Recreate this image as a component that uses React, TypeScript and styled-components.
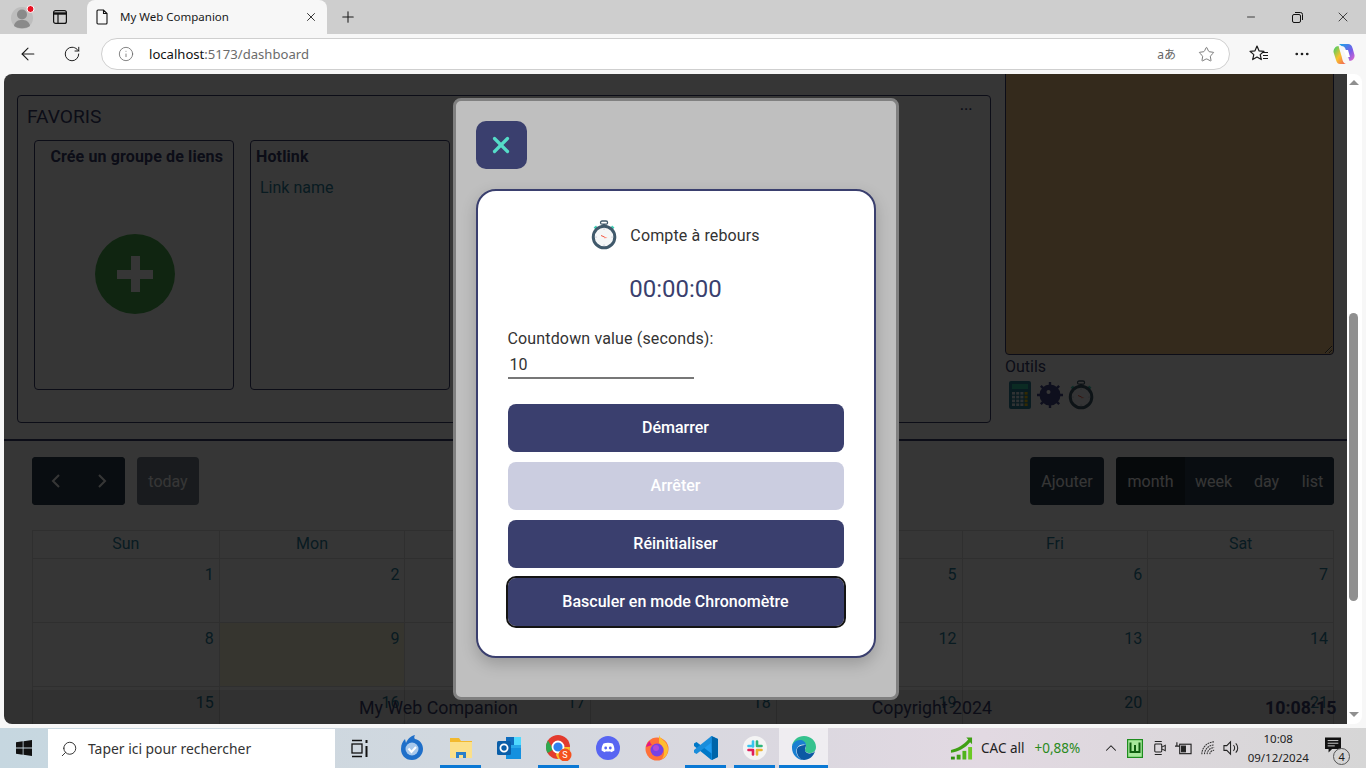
import React from 'react'
import styled, { createGlobalStyle } from 'styled-components'
import { ArrowLeft, ChevronUp, Info, MoreHorizontal, Plus, RotateCw, Search, Star, X, Minus } from 'lucide-react'

const NAVY = '#3a3f6e'
const LINK = '#2b7f9e'
const FC = '#2c3e50'

const GlobalStyle = createGlobalStyle`
  html, body {
    margin: 0;
    padding: 0;
    height: 768px;
    overflow: hidden;
    background: #f7f7f7;
    font-family: Roboto, sans-serif;
  }
  * { box-sizing: border-box; }
`

const Screen = styled.div`
  width: 1366px;
  height: 768px;
  display: flex;
  flex-direction: column;
`

/* browser chrome */
const TabStrip = styled.div`
  height: 34px;
  background: #cecece;
  display: flex;
  align-items: flex-end;
  color: #1a1a1a;
`
const ProfileSlot = styled.div`
  width: 44px;
  height: 34px;
  padding: 3px 0 0 10px;
`
const StripButton = styled.div`
  width: 43px;
  height: 34px;
  display: flex;
  align-items: center;
  justify-content: center;
  padding-right: 11px;
`
const Tab = styled.div`
  width: 240px;
  height: 34px;
  background: #f7f7f7;
  border-radius: 8px 8px 0 0;
  display: flex;
  align-items: center;
  padding: 0 9px 1px;
  font: 11.5px "Noto Sans", sans-serif;
`
const TabTitle = styled.span`
  margin-left: 12px;
  flex: 1;
`
const NewTab = styled.div`
  width: 42px;
  height: 34px;
  display: flex;
  align-items: center;
  justify-content: center;
`
const WindowControls = styled.div`
  margin-left: auto;
  display: flex;
  height: 34px;
`
const WindowButton = styled.div`
  width: 46px;
  display: flex;
  align-items: center;
  justify-content: center;
`
const Toolbar = styled.div`
  height: 40px;
  background: #f7f7f7;
  display: flex;
  align-items: center;
  color: #1a1a1a;
`
const NavButton = styled.div`
  width: 44px;
  display: flex;
  justify-content: center;
  margin-left: ${(p: { $first?: boolean }) => (p.$first ? '6px' : '0')};
`
const AddressBar = styled.div`
  width: 1129px;
  height: 32px;
  margin-left: 7px;
  background: #fff;
  border: 1px solid #cfcfcf;
  border-radius: 16px;
  display: flex;
  align-items: center;
  padding: 0 14px 0 16px;
  color: #666;
`
const Url = styled.div`
  margin-left: 15px;
  flex: 1;
  font: 13.1px "Noto Sans", sans-serif;
  color: #6b6b6b;
  b { font-weight: 400; color: #111; }
`
const Translate = styled.span`
  font: 12px "Noto Sans", "Noto Sans CJK JP", sans-serif;
  color: #666;
  margin-right: 22px;
`
const ToolbarRight = styled.div`
  display: flex;
  align-items: center;
  margin-left: 19px;
  gap: 24px;
`
const CopilotSlot = styled.div`
  display: flex;
  margin-left: -2px;
`

/* viewport */
const Viewport = styled.div`
  height: 650px;
  display: flex;
  padding-left: 4px;
  background: #f7f7f7;
`
const Page = styled.div`
  position: relative;
  width: 1343px;
  height: 650px;
  background: #fff;
  border-radius: 8px 0 0 8px;
  overflow: hidden;
`
const Scrollbar = styled.div`
  width: 15px;
  height: 650px;
  background: #fff;
  border-radius: 0 8px 8px 0;
  display: flex;
  flex-direction: column;
  align-items: center;
  padding: 6px 2px 7px 0;
`
const ArrowUp = styled.div`
  border: 5px solid transparent;
  border-top: 0;
  border-bottom: 5px solid #8f8f8f;
`
const ArrowDown = styled.div`
  margin-top: auto;
  border: 5px solid transparent;
  border-bottom: 0;
  border-top: 5px solid #8f8f8f;
`
const Thumb = styled.div`
  width: 9px;
  height: 288px;
  margin-top: 228px;
  background: #8f8f8f;
  border-radius: 5px;
`

/* dashboard below the overlay */
const TopRow = styled.div`
  display: flex;
  gap: 14px;
  padding: 0 13px;
  height: 349px;
`
const Favoris = styled.section`
  position: relative;
  width: 974px;
  height: 328px;
  margin-top: 21px;
  border: 1px solid ${NAVY};
  border-radius: 4px;
  padding: 9px 9px 0;
`
const FavTitle = styled.div`
  font-size: 19.2px;
  line-height: 24px;
  color: ${NAVY};
`
const FavMenu = styled.div`
  position: absolute;
  top: 1px;
  right: 17px;
  font-size: 13px;
  font-weight: 700;
  line-height: 18px;
  letter-spacing: 0.6px;
  color: ${NAVY};
`
const Groups = styled.div`
  display: flex;
  gap: 16px;
  margin: 11px 0 0 7px;
`
const Group = styled.div`
  width: 200px;
  height: 250px;
  border: 1px solid ${NAVY};
  border-radius: 4px;
  padding: 6px 5px 5px;
  display: flex;
  flex-direction: column;
`
const GroupTitle = styled.div<{ $end?: boolean }>`
  font-size: 16px;
  font-weight: 700;
  line-height: 20px;
  letter-spacing: 0.13px;
  color: ${NAVY};
  text-align: ${(p) => (p.$end ? 'right' : 'left')};
  padding-right: ${(p) => (p.$end ? '5px' : '0')};
  white-space: nowrap;
`
const LinkName = styled.a`
  margin: 11px 0 0 4px;
  font-size: 16px;
  line-height: 20px;
  color: ${LINK};
`
const AddGroup = styled.div`
  position: relative;
  width: 80px;
  height: 80px;
  margin: 67px 0 0 55px;
  border-radius: 50%;
  background: #4caf50;
  &::before, &::after {
    content: '';
    position: absolute;
    background: #fff;
  }
  &::before { left: 22px; top: 36px; width: 36px; height: 9px; }
  &::after { left: 36px; top: 22px; width: 9px; height: 36px; }
`
const Side = styled.aside`
  width: 329px;
`
const Notes = styled.textarea`
  display: block;
  width: 329px;
  height: 285px;
  margin-top: -4px;
  background: #f3c885;
  border: 1px solid ${NAVY};
  border-radius: 4px;
  outline: none;
`
const OutilsLabel = styled.div`
  margin-top: 2px;
  font-size: 16px;
  line-height: 20px;
  color: ${NAVY};
`
const Tools = styled.div`
  display: flex;
  align-items: center;
  gap: 5px;
  margin-top: 3px;
  padding-left: 3px;
`
const Divider = styled.div`
  height: 2px;
  margin-top: 16px;
  background: ${NAVY};
`
const CalendarWrap = styled.div`
  padding: 16px 13px 0 28px;
`
const CalToolbar = styled.div`
  display: flex;
  align-items: stretch;
  height: 48px;
  margin-bottom: 25px;
`
const BtnGroup = styled.div<{ $left?: number }>`
  display: flex;
  margin-left: ${(p) => p.$left ?? 0}px;
  background: ${FC};
  border-radius: 4px;
  overflow: hidden;
`
const FcButton = styled.div<{ $w: number; $active?: boolean }>`
  width: ${(p) => p.$w}px;
  display: flex;
  align-items: center;
  justify-content: center;
  font-size: 16px;
  color: #fff;
  background: ${(p) => (p.$active ? '#1e2b37' : FC)};
`
const TodayButton = styled(FcButton)`
  margin-left: 12px;
  border-radius: 4px;
  opacity: 0.65;
`
const Spacer = styled.div`
  flex: 1;
`
const DayHead = styled.div`
  display: grid;
  grid-template-columns: repeat(7, 1fr);
  height: 29px;
  border: 1px solid #ddd;
`
const HeadCell = styled.div`
  border-left: 1px solid #ddd;
  font-size: 16px;
  line-height: 25px;
  text-align: center;
  color: ${LINK};
  &:first-child { border-left: 0; }
`
const Week = styled.div`
  display: grid;
  grid-template-columns: repeat(7, 1fr);
  height: 64px;
  border: 1px solid #ddd;
  border-top: 0;
`
const DayCell = styled.div<{ $today?: boolean }>`
  border-left: 1px solid #ddd;
  padding: 4px 5px;
  font-size: 16px;
  line-height: 24px;
  text-align: right;
  color: ${LINK};
  background: ${(p) => (p.$today ? 'rgba(255, 220, 40, 0.15)' : 'transparent')};
  &:first-child { border-left: 0; }
`
const Footer = styled.footer`
  position: absolute;
  left: 0;
  right: 0;
  bottom: 0;
  height: 34px;
  display: flex;
  align-items: center;
  padding: 1px 0 0 355px;
  background: rgba(0, 0, 0, 0.1);
  font-size: 17.8px;
  color: ${NAVY};
`
const FooterItem = styled.span<{ $gap?: number; $bold?: boolean }>`
  margin-left: ${(p) => p.$gap ?? 0}px;
  font-weight: ${(p) => (p.$bold ? 700 : 400)};
`

/* modal */
const Overlay = styled.div`
  position: absolute;
  inset: 0;
  background: rgba(0, 0, 0, 0.79);
  display: flex;
  align-items: center;
  justify-content: center;
`
const Modal = styled.div`
  width: 446px;
  height: 602px;
  background: #bfbfbf;
  border: 3px solid #808080;
  border-radius: 8px;
  padding: 20px;
`
const CloseButton = styled.div`
  width: 51px;
  height: 48px;
  background: ${NAVY};
  border-radius: 10px;
  display: flex;
  align-items: center;
  justify-content: center;
  color: #55dcc8;
`
const Card = styled.div`
  width: 400px;
  height: 469px;
  margin-top: 20px;
  background: #fff;
  border: 2px solid ${NAVY};
  border-radius: 20px;
  box-shadow: 0 6px 16px rgba(0, 0, 0, 0.2);
  padding: 28px 30px 0;
`
const CardHead = styled.div`
  display: flex;
  align-items: center;
  justify-content: center;
  gap: 13px;
  height: 32px;
  font-size: 16px;
  letter-spacing: 0.13px;
  color: #333;
`
const Time = styled.div`
  margin-top: 23px;
  font-size: 24px;
  line-height: 30px;
  text-align: center;
  color: ${NAVY};
`
const FieldLabel = styled.label`
  display: block;
  margin-top: 25px;
  font-size: 16px;
  line-height: 20px;
  letter-spacing: 0.15px;
  color: #333;
`
const FieldInput = styled.input`
  display: block;
  width: 186px;
  height: 27px;
  margin-top: 3px;
  padding: 0 2px 1px;
  border: 0;
  border-bottom: 2px solid #777;
  outline: none;
  background: transparent;
  font: 16px Roboto, sans-serif;
  color: #333;
`
const Actions = styled.div`
  display: flex;
  flex-direction: column;
  gap: 10px;
  margin-top: 25px;
`
const ActionButton = styled.button<{ $focus?: boolean }>`
  width: 336px;
  height: 48px;
  border: 0;
  border-radius: 8px;
  padding: 0 0 2px;
  background: ${NAVY};
  font: 500 16px Roboto, sans-serif;
  color: #fff;
  outline: ${(p) => (p.$focus ? '2px solid #141414' : 'none')};
  &:disabled { background: #cbcde0; }
`

/* taskbar */
const Taskbar = styled.div`
  height: 40px;
  margin-top: 4px;
  display: flex;
  align-items: center;
  background: linear-gradient(90deg, #c6d7e0 0%, #d2d8df 35%, #dcd8e0 60%, #e2d9e2 72%, #d6d6d6 100%);
  font-family: "Noto Sans", sans-serif;
  color: #1a1a1a;
`
const StartButton = styled.div`
  width: 48px;
  display: flex;
  justify-content: center;
`
const SearchBox = styled.div`
  width: 287px;
  height: 39px;
  margin-top: 1px;
  background: #fff;
  display: flex;
  align-items: center;
  padding-left: 12px;
  gap: 10px;
  font-size: 13.9px;
  color: #333;
`
const TaskView = styled.div`
  width: 52px;
  padding-right: 2px;
  display: flex;
  justify-content: center;
`
const AppCell = styled.div<{ $open?: boolean; $active?: boolean }>`
  width: ${(p) => (p.$active ? '49px' : '41px')};
  margin: ${(p) => (p.$active ? '0' : '0 4px')};
  height: 40px;
  display: flex;
  align-items: center;
  justify-content: center;
  background: ${(p) => (p.$active ? 'rgba(255,255,255,.55)' : 'transparent')};
  border-bottom: 3px solid ${(p) => (p.$open ? '#0a78d4' : 'transparent')};
  padding-top: 3px;
`
const Ticker = styled.div`
  display: flex;
  align-items: center;
  margin-left: 122px;
  font-size: 13.5px;
  color: #222;
`
const TickerName = styled.span`
  margin-left: 8px;
`
const TickerValue = styled.span`
  margin-left: 10px;
  color: #2a8a1c;
`
const Tray = styled.div`
  display: flex;
  align-items: center;
  margin-left: 18px;
`
const TraySlot = styled.div<{ $w: number }>`
  width: ${(p) => p.$w}px;
  display: flex;
  justify-content: center;
`
const Clock = styled.div`
  width: 70px;
  text-align: center;
  font-size: 11.5px;
  line-height: 19px;
  color: #222;
`
const Notify = styled.div`
  position: relative;
  width: 24px;
  height: 24px;
  margin-left: 12px;
`
const NotifyBadge = styled.span`
  position: absolute;
  right: -1px;
  bottom: -5px;
  width: 17px;
  height: 17px;
  border: 1px solid #555;
  border-radius: 50%;
  background: #d4d4d4;
  font-size: 11px;
  line-height: 15px;
  text-align: center;
`

const Stopwatch = ({ size = 30 }: { size?: number }) => (
  <svg width={size * 0.87} height={size} viewBox="0 0 26 30">
    <rect x="9.5" y="1" width="7" height="3.2" rx="1.5" fill="none" stroke="#40596b" strokeWidth="1.3" />
    <rect x="11.8" y="4" width="2.4" height="3" fill="#40596b" />
    <path d="M2.6 7.4 5 5.6l1.4 1.8-2.3 1.8zM23.4 7.4 21 5.6l-1.4 1.8 2.3 1.8z" fill="#3fcfb4" />
    <circle cx="13" cy="17" r="10.8" fill="#f4f6f7" stroke="#40596b" strokeWidth="3" />
    <path d="M10 15.500 13.400 17" stroke="#f1543f" strokeWidth="1" />
    <path d="M13.200 16.400 16.500 18l-3.500.3z" fill="#ff8a7a" />
    <circle cx="13" cy="9" r=".6" fill="#aab" />
    <circle cx="13" cy="25" r=".6" fill="#aab" />
    <circle cx="5" cy="17" r=".6" fill="#aab" />
    <circle cx="21" cy="17" r=".6" fill="#aab" />
  </svg>
)

const Calculator = () => (
  <svg width="24" height="28" viewBox="0 0 24 28">
    <rect x="1" y="0" width="22" height="28" rx="2" fill="#2e7f96" />
    <rect x="4" y="3" width="16" height="5" fill="#36c9a5" />
    {[0, 1, 2, 3].map((r) =>
      [0, 1, 2, 3].map((c) => (
        <rect key={`${r}-${c}`} x={4 + c * 4.2} y={11 + r * 3.8} width="3" height="2.6" fill={c === 3 ? '#f1c40f' : '#dfe9ee'} />
      )),
    )}
  </svg>
)

const Bomb = () => (
  <svg width="26" height="26" viewBox="0 0 26 26">
    <path d="M13 0v5M13 21v5M0 13h5M21 13h5M3.800 3.800l3.400 3.400M18.800 18.800l3.400 3.400M3.800 22.200l3.400-3.400M18.800 7.200l3.400-3.400" stroke="#45478a" strokeWidth="2.400" />
    <circle cx="13" cy="13" r="10.500" fill="#45478a" />
    <circle cx="11.500" cy="10" r="2" fill="#fff" />
  </svg>
)

const WinLogo = () => (
  <svg width="16" height="16" viewBox="0 0 16 16" fill="#111">
    <path d="M0 2.300 6.700 1.300v6.200H0zM7.500 1.200 16 0v7.500H7.500zM0 8.400h6.700v6.300L0 13.700zM7.500 8.400H16V16l-8.500-1.200z" />
  </svg>
)

const TaskViewIcon = () => (
  <svg width="18" height="19" viewBox="0 0 18 19" fill="none" stroke="#111" strokeWidth="1.300">
    <path d="M1 1.500h10M1 17.500h10" />
    <rect x="1" y="5" width="10" height="9" />
    <path d="M15.500 1v3M15.500 7v11" strokeWidth="2" />
  </svg>
)

const Thunderbird = () => (
  <svg width="24" height="26" viewBox="0 0 24 26">
    <path d="M12 25C5 25 1 20 1 14 1 9 3 6 5 4l1 4c1-3 4-7 9-8-1 2-1 3 0 4 5 1 8 5 8 10 0 6-5 11-11 11z" fill="#1f6fc9" />
    <circle cx="12" cy="14" r="6.500" fill="#a9c9ec" />
    <path d="m8.500 13.500 3 3.500 4.500-5" fill="none" stroke="#fff" strokeWidth="2" />
  </svg>
)
const Files = () => (
  <svg width="24" height="22" viewBox="0 0 24 22">
    <path d="M1 1h9l2 3h11v17H1z" fill="#f2b92e" />
    <rect x="1" y="5" width="22" height="16" fill="#fbe08a" />
    <path d="M7 21v-6h10v6h-3v-3h-4v3z" fill="#2b7fc9" />
  </svg>
)
const Outlook = () => (
  <svg width="25" height="24" viewBox="0 0 25 24">
    <path d="M9 1h15v16H9z" fill="#28a8ea" />
    <path d="M9 1h8v8H9z" fill="#0f6cbd" />
    <path d="M17 1l7 0v8h-7z" fill="#50d9ff" />
    <path d="M9 12l15 0v11H9z" fill="#1490df" />
    <rect x="0" y="5" width="14" height="14" rx="1.500" fill="#0a5ea8" />
    <circle cx="7" cy="12" r="3.600" fill="none" stroke="#fff" strokeWidth="1.800" />
  </svg>
)
const Chrome = () => (
  <svg width="26" height="26" viewBox="0 0 26 26">
    <circle cx="12" cy="12" r="12" fill="#e33b2e" />
    <path d="M12 12 1.600 18A12 12 0 0 1 2 5.500L7 14z" fill="#2fa84f" />
    <path d="M12 12h12a12 12 0 0 1-12 12l-2-4z" fill="#fbc02d" />
    <circle cx="12" cy="12" r="5.500" fill="#2f80ed" stroke="#fff" strokeWidth="1.800" />
    <circle cx="19" cy="20" r="6.500" fill="#f4511e" />
    <text x="19" y="23" fontSize="9" textAnchor="middle" fill="#fff" fontFamily="Roboto, sans-serif">S</text>
  </svg>
)
const Discord = () => (
  <svg width="24" height="24" viewBox="0 0 24 24">
    <circle cx="12" cy="12" r="12" fill="#5865f2" />
    <path d="M7.500 7.600c2.800-1 6.200-1 9 0 1.400 2.100 2 4.300 1.900 7-1.100.9-2.200 1.400-3.400 1.700l-.7-1.100c-1.700.4-3.100.4-4.600 0l-.7 1.100c-1.200-.3-2.300-.8-3.400-1.700-.1-2.700.5-4.900 1.900-7z" fill="#fff" />
    <circle cx="9.700" cy="12" r="1.400" fill="#5865f2" />
    <circle cx="14.300" cy="12" r="1.400" fill="#5865f2" />
  </svg>
)
const Firefox = () => (
  <svg width="24" height="26" viewBox="0 0 24 26">
    <circle cx="12" cy="14" r="11.500" fill="#ff7139" />
    <path d="M14 0c1 4 8 6 9 13 .5 5-2 9-6 11 4-6 2-12-3-16z" fill="#ffbd2e" />
    <path d="M1 12c1-3 2-5 4-6 0 2 1 3 2 4z" fill="#e31587" />
    <circle cx="12" cy="15" r="6.500" fill="#7542e5" />
    <circle cx="11" cy="13" r="3" fill="#b04ad8" />
  </svg>
)
const VsCode = () => (
  <svg width="26" height="26" viewBox="0 0 26 26">
    <path d="M18.500 1 25 4v18l-6.500 3L7 14.500z" fill="#1f9cf0" />
    <path d="M18.500 1 19 25l6-3V4z" fill="#0065a9" />
    <path d="M1 8.500 3.500 7l15 11.500V25L1 11z" fill="#0078c8" />
    <path d="M1 17.500 3.500 19l15-11.500V1L1 15z" fill="#1a8ddb" />
  </svg>
)
const Slack = () => (
  <svg width="24" height="24" viewBox="0 0 24 24">
    <circle cx="12" cy="12" r="12" fill="#f4f4f4" />
    <g strokeWidth="2.600" strokeLinecap="round">
      <path d="M10 5.500v5" stroke="#36c5f0" />
      <path d="M5.500 10H9" stroke="#36c5f0" />
      <path d="M18.500 10h-4.500" stroke="#2eb67d" />
      <path d="M14 5.500V9" stroke="#2eb67d" />
      <path d="M14 18.500V14" stroke="#ecb22e" />
      <path d="M18.500 14H15" stroke="#ecb22e" />
      <path d="M5.500 14H10" stroke="#e01e5a" />
      <path d="M10 18.500V15" stroke="#e01e5a" />
    </g>
  </svg>
)
const Edge = () => (
  <svg width="26" height="26" viewBox="0 0 26 26">
    <path d="M13 1c7 0 12 5 12 11 0 4-3 6-6 6-4 0-5-2-5-3 0-1 1-2 1-4 0-3-3-5-6-5-4 0-7 3-8 5 1-6 6-10 12-10z" fill="#35c28e" />
    <path d="M1 11c1-3 4-6 8-6 3 0 6 2 6 5-2-1-7-1-9 3-2 5 1 10 6 12C6 25 1 19 1 13z" fill="#1a7fd1" />
    <path d="M6 14c1-3 5-4 9-4 0 2-1 3-1 5 0 3 4 4 7 3 1 0 2-1 3-2-1 5-6 9-11 9-4 0-8-5-7-11z" fill="#0c59a4" />
  </svg>
)
const Copilot = () => (
  <svg width="22" height="22" viewBox="0 0 22 22">
    <defs>
      <linearGradient id="cpA" x1="0" y1="0" x2="1" y2="1">
        <stop offset="0" stopColor="#14a8e8" />
        <stop offset=".6" stopColor="#7a5be8" />
        <stop offset="1" stopColor="#e868c8" />
      </linearGradient>
      <linearGradient id="cpB" x1="0" y1="0" x2="1" y2="1">
        <stop offset="0" stopColor="#2fce6f" />
        <stop offset=".5" stopColor="#f8c22c" />
        <stop offset="1" stopColor="#f0555c" />
      </linearGradient>
    </defs>
    <path d="M6 1h9c2.500 0 3.500 1 4.500 4l2 7c.5 3-2 6-5 6l-3-9-1-3c-.6-2-2-3-4-3z" fill="url(#cpA)" />
    <path d="M.5 9c0-3 2-6 5-6l3 10 1 4c.5 2 2 4 4 4H7c-2 0-3-1-4-4z" fill="url(#cpB)" />
    <path d="M10.500 7h4.500l2 7h-3.500z" fill="#fff" />
  </svg>
)
const Profile = () => (
  <svg width="30" height="28" viewBox="0 0 30 28">
    <circle cx="12" cy="15" r="11" fill="#bdbdbd" />
    <circle cx="12" cy="11.500" r="5" fill="#8a8a8a" />
    <path d="M4 23c1-5 4-6 8-6s7 1 8 6c-4 3-12 3-16 0z" fill="#8a8a8a" />
    <circle cx="20.500" cy="6" r="3.500" fill="#e81123" stroke="#fff" strokeWidth="1" />
  </svg>
)
const Favorites = () => (
  <svg width="20" height="20" viewBox="0 0 20 20" fill="none" stroke="#1a1a1a" strokeWidth="1.200">
    <path d="M8 2l2 4.800 5 .5-3.800 3.300 1.100 5L8 13l-4.300 2.600 1.100-5L1 7.300l5-.5z" strokeLinejoin="round" />
    <path d="M13 8.500h6M14 11.500h5M14 14.500h5" />
  </svg>
)
const SidebarIcon = () => (
  <svg width="14" height="14" viewBox="0 0 14 14" fill="none" stroke="#111" strokeWidth="1.200">
    <rect x=".6" y=".6" width="12.800" height="12.800" rx="2" />
    <path d="M.6 3.500h12.800" strokeWidth="2.400" />
    <path d="M5 3.500v10" />
  </svg>
)
const PageIcon = () => (
  <svg width="12" height="16" viewBox="0 0 12 16" fill="none" stroke="#111" strokeWidth="1.100">
    <path d="M1 2a1 1 0 0 1 1-1h5.500L11 4.500V14a1 1 0 0 1-1 1H2a1 1 0 0 1-1-1zM7.500 1v3.500H11" />
  </svg>
)
const Restore = () => (
  <svg width="11" height="11" viewBox="0 0 11 11" fill="none" stroke="#111" strokeWidth="1">
    <rect x=".5" y="2.500" width="8" height="8" rx="1.500" />
    <path d="M3 .5h5.500a2 2 0 0 1 2 2V8" />
  </svg>
)
const Chart = () => (
  <svg width="23" height="24" viewBox="0 0 24 24">
    <path d="M1 14C8 12 14 9 19 3l-2-2h6v7l-2-2C16 12 9 16 1 17z" fill="#3fa014" />
    <rect x="1" y="21" width="4" height="3" fill="#2f8f10" />
    <rect x="7" y="19" width="4" height="5" fill="#3fa014" />
    <rect x="13" y="15" width="4" height="9" fill="#4fb31c" />
    <rect x="19" y="11" width="4" height="13" fill="#6bc924" />
  </svg>
)
const TrayW = () => (
  <svg width="16" height="19" viewBox="0 0 16 19">
    <rect x=".6" y=".6" width="14.800" height="17.800" fill="#a6e89a" stroke="#1e8c1e" strokeWidth="1.200" />
    <path d="M3.500 3.500v9.500h9V3.500M8 6v7" fill="none" stroke="#0e5e0e" strokeWidth="2" />
  </svg>
)
const TrayMic = () => (
  <svg width="14" height="18" viewBox="0 0 16 18" fill="none" stroke="#222" strokeWidth="1.200">
    <rect x="2" y="4.500" width="8" height="9" rx="1" />
    <path d="M10 8l4-2v6l-4-2M2 1.500h8M2 16.500h8" />
  </svg>
)
const TrayPower = () => (
  <svg width="17" height="14" viewBox="0 0 18 14" fill="none" stroke="#222" strokeWidth="1.200">
    <rect x="5" y="3" width="12" height="10" />
    <rect x="7" y="5" width="4" height="6" fill="#222" />
    <path d="M0 5h5M2 1v4" />
  </svg>
)
const TrayWifi = () => (
  <svg width="14" height="14" viewBox="0 0 16 16" fill="none" stroke="#333" strokeWidth="1.200">
    <path d="M1 15A14 14 0 0 1 15 1M4 15A11 11 0 0 1 15 4.500M7 15a8 8 0 0 1 8-7.500M10 15a5 5 0 0 1 5-4.500" strokeDasharray="2 .8" />
  </svg>
)
const TrayVolume = () => (
  <svg width="17" height="16" viewBox="0 0 18 16" fill="none" stroke="#222" strokeWidth="1.100">
    <path d="M1 5.500h3L8 1.500v13l-4-4H1zM11 5a4 4 0 0 1 0 6M13.500 3a7 7 0 0 1 0 10" />
  </svg>
)
const NotifyIcon = () => (
  <svg width="16" height="16" viewBox="0 0 18 17">
    <path d="M0 0h18v13H8l-4 4v-4H0z" fill="#111" />
    <path d="M3 3.500h12M3 6.500h12M3 9.500h8" stroke="#ddd" />
  </svg>
)

const weeks = [
  [1, 2, 3, 4, 5, 6, 7],
  [8, 9, 10, 11, 12, 13, 14],
  [15, 16, 17, 18, 19, 20, 21],
]
const days = ['Sun', 'Mon', 'Tue', 'Wed', 'Thu', 'Fri', 'Sat']

export default function App() {
  return (
    <Screen>
      <GlobalStyle />
      <TabStrip>
        <ProfileSlot><Profile /></ProfileSlot>
        <StripButton><SidebarIcon /></StripButton>
        <Tab>
          <PageIcon />
          <TabTitle>My Web Companion</TabTitle>
          <X size={14} strokeWidth={1.5} />
        </Tab>
        <NewTab><Plus size={18} strokeWidth={1.4} /></NewTab>
        <WindowControls>
          <WindowButton><Minus size={12} strokeWidth={1.6} /></WindowButton>
          <WindowButton><Restore /></WindowButton>
          <WindowButton><X size={16} strokeWidth={1.2} /></WindowButton>
        </WindowControls>
      </TabStrip>
      <Toolbar>
        <NavButton $first><ArrowLeft size={20} strokeWidth={1.3} /></NavButton>
        <NavButton><RotateCw size={18} strokeWidth={1.3} /></NavButton>
        <AddressBar>
          <Info size={16} strokeWidth={1.2} />
          <Url><b>localhost</b>:5173/dashboard</Url>
          <Translate>aあ</Translate>
          <Star size={17} strokeWidth={1.2} />
        </AddressBar>
        <ToolbarRight>
          <Favorites />
          <MoreHorizontal size={18} strokeWidth={1.6} />
          <CopilotSlot><Copilot /></CopilotSlot>
        </ToolbarRight>
      </Toolbar>
      <Viewport>
        <Page>
          <TopRow>
            <Favoris>
              <FavTitle>FAVORIS</FavTitle>
              <FavMenu>...</FavMenu>
              <Groups>
                <Group>
                  <GroupTitle $end>Crée un groupe de liens</GroupTitle>
                  <AddGroup />
                </Group>
                <Group>
                  <GroupTitle>Hotlink</GroupTitle>
                  <LinkName>Link name</LinkName>
                </Group>
              </Groups>
            </Favoris>
            <Side>
              <Notes readOnly />
              <OutilsLabel>Outils</OutilsLabel>
              <Tools>
                <Calculator />
                <Bomb />
                <Stopwatch />
              </Tools>
            </Side>
          </TopRow>
          <Divider />
          <CalendarWrap>
            <CalToolbar>
              <BtnGroup>
                <FcButton $w={47}><svg width="12" height="16" viewBox="0 0 12 16" fill="none" stroke="#fff" strokeWidth="2"><path d="M9 2 3 8l6 6" /></svg></FcButton>
                <FcButton $w={46}><svg width="12" height="16" viewBox="0 0 12 16" fill="none" stroke="#fff" strokeWidth="2"><path d="m3 2 6 6-6 6" /></svg></FcButton>
              </BtnGroup>
              <TodayButton $w={62}>today</TodayButton>
              <Spacer />
              <BtnGroup>
                <FcButton $w={74}>Ajouter</FcButton>
              </BtnGroup>
              <BtnGroup $left={12}>
                <FcButton $w={69} $active>month</FcButton>
                <FcButton $w={57}>week</FcButton>
                <FcButton $w={49}>day</FcButton>
                <FcButton $w={43}>list</FcButton>
              </BtnGroup>
            </CalToolbar>
            <DayHead>
              {days.map((d) => <HeadCell key={d}>{d}</HeadCell>)}
            </DayHead>
            {weeks.map((w) => (
              <Week key={w[0]}>
                {w.map((n) => <DayCell key={n} $today={n === 9}>{n}</DayCell>)}
              </Week>
            ))}
          </CalendarWrap>
          <Footer>
            <FooterItem>My Web Companion</FooterItem>
            <FooterItem $gap={354}>Copyright 2024</FooterItem>
            <FooterItem $gap={273} $bold>10:08:15</FooterItem>
          </Footer>
          <Overlay>
            <Modal>
              <CloseButton><X size={26} strokeWidth={3} /></CloseButton>
              <Card>
                <CardHead>
                  <Stopwatch />
                  Compte à rebours
                </CardHead>
                <Time>00:00:00</Time>
                <FieldLabel>Countdown value (seconds):</FieldLabel>
                <FieldInput defaultValue="10" />
                <Actions>
                  <ActionButton>Démarrer</ActionButton>
                  <ActionButton disabled>Arrêter</ActionButton>
                  <ActionButton>Réinitialiser</ActionButton>
                  <ActionButton $focus>Basculer en mode Chronomètre</ActionButton>
                </Actions>
              </Card>
            </Modal>
          </Overlay>
        </Page>
        <Scrollbar>
          <ArrowUp />
          <Thumb />
          <ArrowDown />
        </Scrollbar>
      </Viewport>
      <Taskbar>
        <StartButton><WinLogo /></StartButton>
        <SearchBox>
          <Search size={18} strokeWidth={1.3} style={{ transform: 'scaleX(-1)' }} />
          Taper ici pour rechercher
        </SearchBox>
        <TaskView><TaskViewIcon /></TaskView>
        <AppCell><Thunderbird /></AppCell>
        <AppCell $open><Files /></AppCell>
        <AppCell><Outlook /></AppCell>
        <AppCell $open><Chrome /></AppCell>
        <AppCell><Discord /></AppCell>
        <AppCell><Firefox /></AppCell>
        <AppCell $open><VsCode /></AppCell>
        <AppCell $open><Slack /></AppCell>
        <AppCell $open $active><Edge /></AppCell>
        <Ticker>
          <Chart />
          <TickerName>CAC all</TickerName>
          <TickerValue>+0,88%</TickerValue>
        </Ticker>
        <Tray>
          <TraySlot $w={25}><ChevronUp size={18} strokeWidth={1.4} /></TraySlot>
          <TraySlot $w={24}><TrayW /></TraySlot>
          <TraySlot $w={25}><TrayMic /></TraySlot>
          <TraySlot $w={23}><TrayPower /></TraySlot>
          <TraySlot $w={25}><TrayWifi /></TraySlot>
          <TraySlot $w={23}><TrayVolume /></TraySlot>
        </Tray>
        <Clock>10:08<br />09/12/2024</Clock>
        <Notify>
          <NotifyIcon />
          <NotifyBadge>4</NotifyBadge>
        </Notify>
      </Taskbar>
    </Screen>
  )
}
